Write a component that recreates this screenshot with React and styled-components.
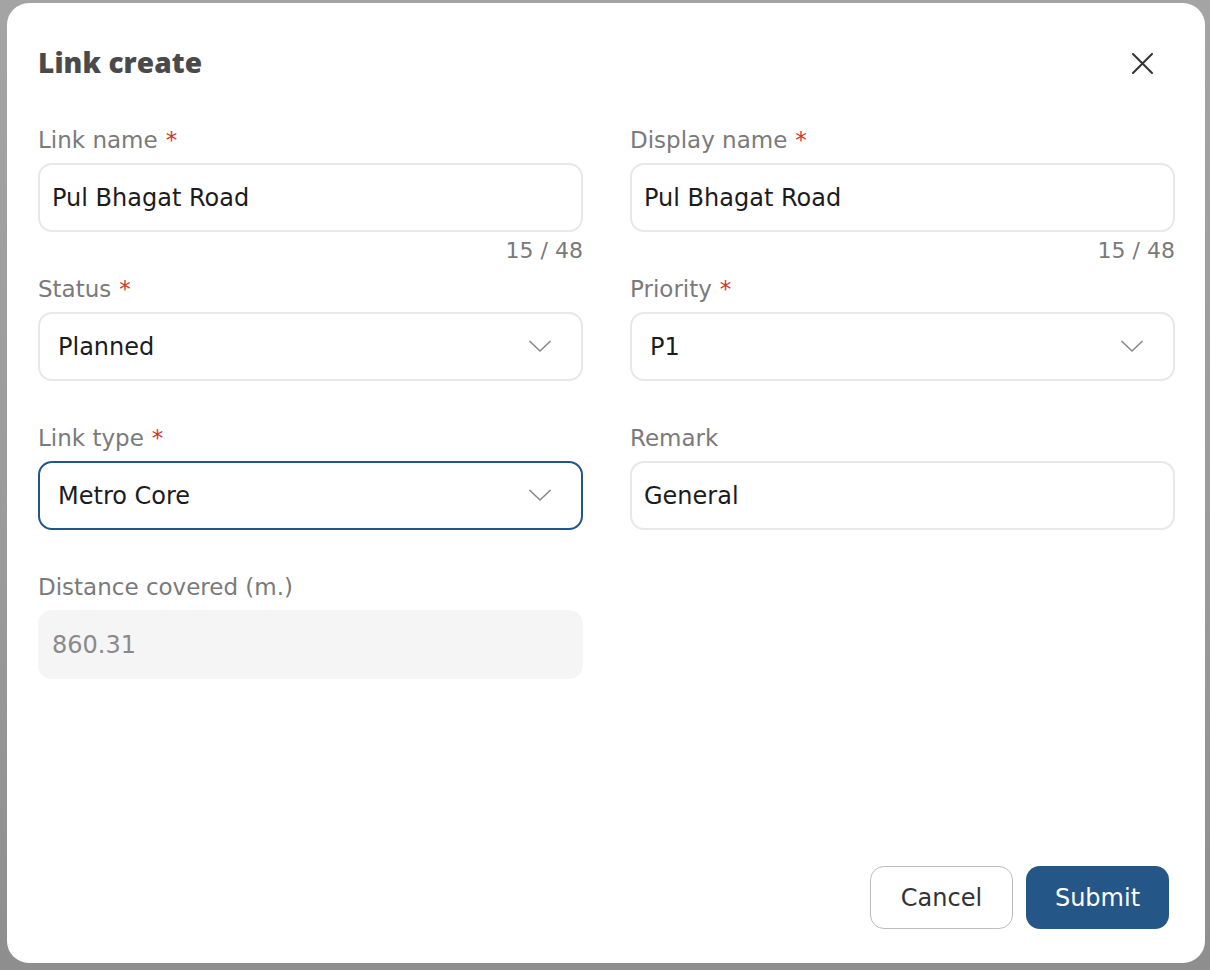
import styled, { createGlobalStyle } from 'styled-components';

const GlobalStyle = createGlobalStyle`
  html, body {
    margin: 0;
    padding: 0;
    background: #9b9b9b;
  }
  * {
    box-sizing: border-box;
  }
`;

const Page = styled.div`
  width: 1210px;
  height: 970px;
  padding: 3px 5px 7px 7px;
  background: linear-gradient(180deg, #a4a4a4 0%, #9a9a9a 60%, #8e8e8e 100%);
  font-family: "DejaVu Sans", "Open Sans", sans-serif;
  overflow: hidden;
`;

const Modal = styled.div`
  width: 1198px;
  height: 960px;
  background: #fff;
  border-radius: 22px;
  padding: 41px 36px 34px 31px;
  display: flex;
  flex-direction: column;
`;

const Header = styled.div`
  display: flex;
  align-items: center;
  justify-content: space-between;
  height: 36px;
  margin-bottom: 45px;
`;

const Title = styled.h2`
  margin: 0;
  font-family: "Open Sans", sans-serif;
  font-size: 28px;
  font-weight: 800;
  color: #4a4a4a;
  letter-spacing: 0.1px;
`;

const CloseButton = styled.button`
  border: none;
  background: none;
  padding: 0;
  margin: 3px 16px 0 0;
  width: 22px;
  height: 22px;
  display: flex;
  align-items: center;
  justify-content: center;
  cursor: pointer;
`;

const Grid = styled.div`
  display: grid;
  grid-template-columns: 545px 545px;
  column-gap: 47px;
  row-gap: 6px;
`;

const Field = styled.div`
  display: flex;
  flex-direction: column;
`;

const Label = styled.label`
  font-size: 23px;
  line-height: 30px;
  color: #7a7a7a;
  margin-bottom: 8px;
`;

const Required = styled.span`
  color: #d0342c;
  margin-left: 8px;
`;

const InputBox = styled.div`
  height: 69px;
  border-radius: 14px;
  border: 2px solid ${({ $focused }) => ($focused ? '#23558a' : '#e8e8e8')};
  background: ${({ $disabled }) => ($disabled ? '#f5f5f5' : '#fff')};
  ${({ $disabled }) => $disabled && 'border-color: #f5f5f5;'}
  display: flex;
  align-items: center;
  justify-content: space-between;
  padding: 0 30px 0 ${({ $select }) => ($select ? '18px' : '12px')};
  font-size: 24px;
  color: ${({ $disabled }) => ($disabled ? '#8a8a8a' : '#1c1c1c')};
`;

const Helper = styled.div`
  height: 36px;
  padding-top: 4px;
  text-align: right;
  font-size: 22px;
  line-height: 30px;
  color: #7a7a7a;
`;

const Footer = styled.div`
  margin-top: auto;
  display: flex;
  justify-content: flex-end;
  gap: 13px;
`;

const Button = styled.button`
  width: 143px;
  height: 63px;
  border-radius: 14px;
  font-family: inherit;
  font-size: 24px;
  cursor: pointer;
  border: ${({ $primary }) => ($primary ? 'none' : '1.5px solid #bdbdbd')};
  background: ${({ $primary }) => ($primary ? '#245687' : '#fff')};
  color: ${({ $primary }) => ($primary ? '#fff' : '#333')};
`;

const Chevron = () => (
  <svg width="22" height="13" viewBox="0 0 22 13" fill="none">
    <path d="M1 1.5 L11 11 L21 1.5" stroke="#8c8c8c" strokeWidth="1.7" strokeLinecap="round" strokeLinejoin="round" />
  </svg>
);

const CloseIcon = () => (
  <svg width="21" height="21" viewBox="0 0 21 21" fill="none">
    <path d="M1 1 L20 20 M20 1 L1 20" stroke="#333" strokeWidth="2" strokeLinecap="round" />
  </svg>
);

const fields = [
  { label: 'Link name', required: true, value: 'Pul Bhagat Road', counter: '15 / 48' },
  { label: 'Display name', required: true, value: 'Pul Bhagat Road', counter: '15 / 48' },
  { label: 'Status', required: true, value: 'Planned', select: true },
  { label: 'Priority', required: true, value: 'P1', select: true },
  { label: 'Link type', required: true, value: 'Metro Core', select: true, focused: true },
  { label: 'Remark', value: 'General' },
  { label: 'Distance covered (m.)', value: '860.31', disabled: true },
];

export default function App() {
  return (
    <Page>
      <GlobalStyle />
      <Modal>
        <Header>
          <Title>Link create</Title>
          <CloseButton aria-label="Close">
            <CloseIcon />
          </CloseButton>
        </Header>
        <Grid>
          {fields.map((f) => (
            <Field key={f.label}>
              <Label>
                {f.label}
                {f.required && <Required>*</Required>}
              </Label>
              <InputBox $select={f.select} $focused={f.focused} $disabled={f.disabled}>
                <span>{f.value}</span>
                {f.select && <Chevron />}
              </InputBox>
              <Helper>{f.counter}</Helper>
            </Field>
          ))}
        </Grid>
        <Footer>
          <Button>Cancel</Button>
          <Button $primary>Submit</Button>
        </Footer>
      </Modal>
    </Page>
  );
}
